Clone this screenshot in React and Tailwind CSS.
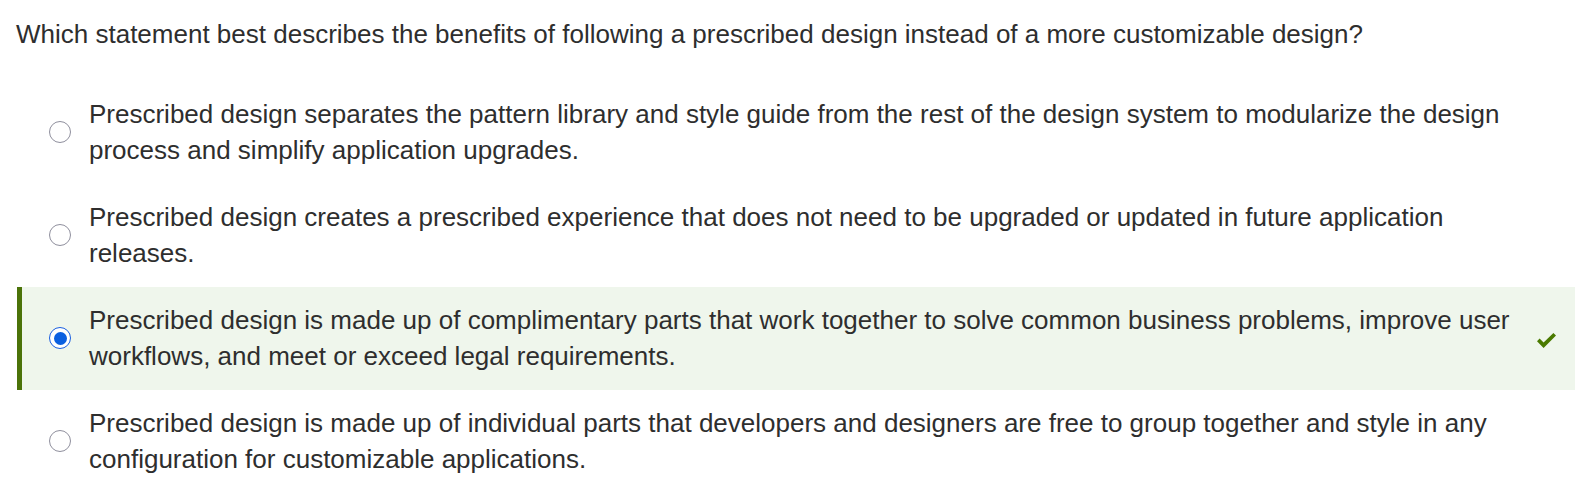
import React from "react";

const options = [
  "Prescribed design separates the pattern library and style guide from the rest of the design system to modularize the design process and simplify application upgrades.",
  "Prescribed design creates a prescribed experience that does not need to be upgraded or updated in future application releases.",
  "Prescribed design is made up of complimentary parts that work together to solve common business problems, improve user workflows, and meet or exceed legal requirements.",
  "Prescribed design is made up of individual parts that developers and designers are free to group together and style in any configuration for customizable applications.",
];

function Radio({ checked }) {
  if (checked) {
    return (
      <span className="flex h-[22px] w-[22px] shrink-0 items-center justify-center rounded-full border-[1.5px] border-[#1a5fe0] bg-white">
        <span className="h-[13px] w-[13px] rounded-full bg-[#0a5fe0]" />
      </span>
    );
  }
  return <span className="h-[22px] w-[22px] shrink-0 rounded-full border border-[#8f8f9d] bg-white" />;
}

export default function App() {
  return (
    <div className="min-h-[499px] bg-white pt-[16px] text-[#2e2e2e]" style={{ fontFamily: '"Liberation Sans", Arial, sans-serif' }}>
      <div className="pl-[16px] text-[26px] leading-[36px]">
        Which statement best describes the benefits of following a prescribed design instead of a more customizable design?
      </div>
      <div className="mt-[28.5px] flex flex-col pl-[17px] pr-[20px]">
        {options.map((t, i) => {
          const sel = i === 2;
          return (
            <div
              key={i}
              className={
                "flex h-[103px] items-center border-l-[5px] pl-[27px] " +
                (sel ? "border-[#4b7309] bg-[#eff6ec]" : "border-transparent")
              }
            >
              <Radio checked={sel} />
              <div className="ml-[18px] w-[1430px] text-[26px] leading-[36px]">{t}</div>
              {sel && (
                <svg className="ml-[17px] mt-[4px]" width="21" height="15" viewBox="0 0 21 15">
                  <path d="M1 8.2 L3.6 5.6 L7.6 9.6 L17.4 0 L20 2.6 L7.6 15 Z" fill="#4a7a00" />
                </svg>
              )}
            </div>
          );
        })}
      </div>
    </div>
  );
}
